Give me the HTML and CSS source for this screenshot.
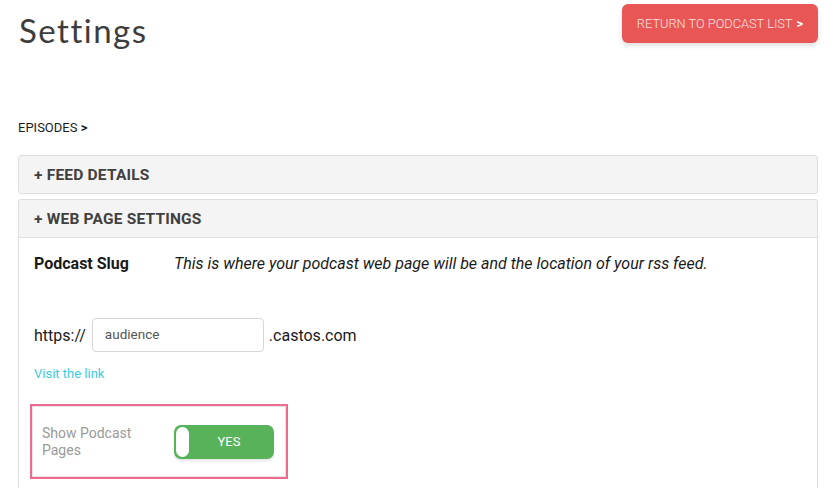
FILE: index.html
```html
<!DOCTYPE html>
<html>
<head>
<meta charset="utf-8">
<link rel="stylesheet" href="styles.css">
</head>
<body>
<div class="page">
  <header class="top">
    <h1 class="title">Settings</h1>
    <a class="return-btn" href="#">RETURN TO PODCAST LIST <b>&gt;</b></a>
  </header>
  <div class="crumb">EPISODES <b>&gt;</b></div>
  <div class="panel">
    <div class="panel-head">+ FEED DETAILS</div>
  </div>
  <div class="panel open">
    <div class="panel-head">+ WEB PAGE SETTINGS</div>
    <div class="panel-body">
      <div class="slug-row">
        <span class="slug-label">Podcast Slug</span>
        <span class="slug-desc">This is where your podcast web page will be and the location of your rss feed.</span>
      </div>
      <div class="url-row">
        <span class="proto">https://</span>
        <input class="slug-input" type="text" value="audience">
        <span class="domain">.castos.com</span>
      </div>
      <a class="visit" href="#">Visit the link</a>
      <div class="highlight">
        <span class="show-label">Show Podcast<br>Pages</span>
        <div class="toggle">
          <span class="knob"></span>
          <span class="toggle-text">YES</span>
        </div>
      </div>
    </div>
  </div>
</div>
</body>
</html>
```
FILE: styles.css
```css
html, body {
  margin: 0;
  padding: 0;
  background: #fff;
}
body {
  font-family: Roboto, "Liberation Sans", sans-serif;
  color: #222;
}
.page {
  padding: 0 15px 0 18px;
}
.top {
  display: flex;
  justify-content: space-between;
  align-items: flex-start;
  padding-top: 4px;
}
.title {
  margin: 6px 0 0 1px;
  font-family: Lato, "Liberation Sans", sans-serif;
  font-weight: 400;
  font-size: 33px;
  line-height: 40px;
  color: #3d3d3d;
  letter-spacing: 1.5px;
}
.return-btn {
  display: flex;
  align-items: center;
  justify-content: center;
  width: 196px;
  height: 39px;
  box-sizing: border-box;
  background: #e95656;
  border-radius: 6px;
  color: #fbe3e3;
  font-size: 12.8px;
  font-weight: 300;
  text-decoration: none;
  box-shadow: 0 3px 5px rgba(0,0,0,0.12);
}
.return-btn b {
  font-weight: 700;
  color: #fff;
  margin-left: 4px;
}
.crumb {
  margin-top: 70px;
  font-size: 13px;
  line-height: 16px;
  color: #1c1c1c;
}
.crumb b {
  font-weight: 700;
}
.panel {
  margin-top: 19px;
  border: 1px solid #dedede;
  border-radius: 3px;
  background: #f4f4f4;
}
.panel + .panel {
  margin-top: 5px;
}
.panel-head {
  height: 37px;
  display: flex;
  align-items: center;
  padding-left: 15px;
  font-size: 15.5px;
  font-weight: 700;
  color: #404040;
  letter-spacing: 0.2px;
}
.open {
  border-bottom: none;
  border-radius: 3px 3px 0 0;
}
.panel-body {
  background: #fff;
  border-top: 1px solid #dedede;
  padding: 16px 15px 10px;
}
.slug-row {
  display: flex;
  font-size: 16px;
  line-height: 20px;
}
.slug-label {
  width: 140px;
  font-weight: 700;
  color: #1a1a1a;
}
.slug-desc {
  font-style: italic;
  color: #1a1a1a;
}
.url-row {
  display: flex;
  align-items: center;
  margin-top: 44px;
}
.proto, .domain {
  font-size: 16px;
  color: #1a1a1a;
}
.slug-input {
  width: 172px;
  height: 34px;
  box-sizing: border-box;
  margin: 0 5px 0 6px;
  border: 1px solid #d6d6d6;
  border-radius: 4px;
  padding: 0 12px 2px;
  font-family: Roboto, "Liberation Sans", sans-serif;
  font-size: 13.5px;
  color: #555;
  outline: none;
  vertical-align: top;
}
.visit {
  display: block;
  margin-top: 14px;
  font-size: 13px;
  color: #3ccbe0;
  text-decoration: none;
}
.highlight {
  display: flex;
  align-items: center;
  width: 258px;
  height: 75px;
  box-sizing: border-box;
  margin: 23px 0 0 -4px;
  border: 2px solid #ee6b8f;
  box-shadow: inset 0 0 0 1px #e4e4e4;
  padding: 0 12px 0 10px;
}
.show-label {
  width: 132px;
  font-size: 14px;
  line-height: 17px;
  color: #9a9a9a;
}
.toggle {
  position: relative;
  display: flex;
  align-items: center;
  justify-content: center;
  width: 100px;
  height: 34px;
  box-sizing: border-box;
  background: #58b25a;
  border-radius: 7px;
  box-shadow: 0 2px 3px rgba(0,0,0,0.1);
}
.knob {
  position: absolute;
  left: 2px;
  top: 2px;
  width: 13px;
  height: 30px;
  background: #fff;
  border-radius: 7px;
}
.toggle-text {
  margin-left: 10px;
  font-size: 13px;
  color: #fff;
}
```
